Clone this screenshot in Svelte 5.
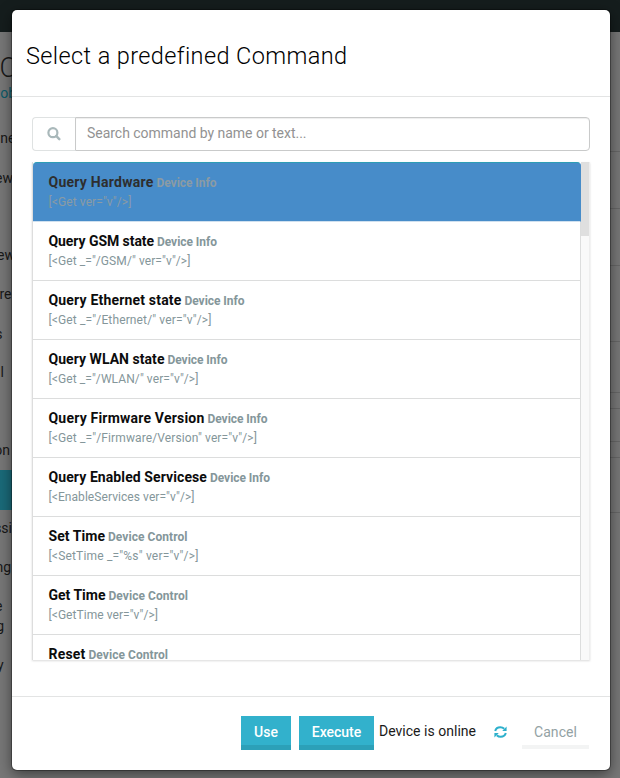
<script>
  const commands = [
    { name: 'Query Hardware', nw: 105, tag: 'Device Info', tw: 60, code: '[<Get ver="v"/>]', cw: 83 },
    { name: 'Query GSM state', nw: 105.5, tag: 'Device Info', tw: 60, code: '[<Get _="/GSM/" ver="v"/>]', cw: 142 },
    { name: 'Query Ethernet state', nw: 133, tag: 'Device Info', tw: 60, code: '[<Get _="/Ethernet/" ver="v"/>]', cw: 163 },
    { name: 'Query WLAN state', nw: 116, tag: 'Device Info', tw: 60, code: '[<Get _="/WLAN/" ver="v"/>]', cw: 150 },
    { name: 'Query Firmware Version', nw: 156, tag: 'Device Info', tw: 60, code: '[<Get _="/Firmware/Version" ver="v"/>]', cw: 208.5 },
    { name: 'Query Enabled Servicese', nw: 158.5, tag: 'Device Info', tw: 60, code: '[<EnableServices ver="v"/>]', cw: 146 },
    { name: 'Set Time', nw: 56.5, tag: 'Device Control', tw: 79.5, code: '[<SetTime _="%s" ver="v"/>]', cw: 150 },
    { name: 'Get Time', nw: 57, tag: 'Device Control', tw: 79.5, code: '[<GetTime ver="v"/>]', cw: 109.5 },
    { name: 'Reset', nw: 37, tag: 'Device Control', tw: 79.5, code: '[<Reset ver="v"/>]', cw: 95 }
  ];
  const navTexts = [
    { t: 'IC', y: 53, r: 17, s: 27, k: 'big' },
    { t: 'ob', y: 83, r: 16, s: 14, k: 'link' },
    { t: 'ne', y: 128, r: 15.5, s: 14 },
    { t: 'ew', y: 168, r: 13, s: 14 },
    { t: 'ew', y: 245, r: 15, s: 14 },
    { t: 're', y: 284, r: 11.5, s: 14 },
    { t: 's', y: 324, r: 2.5, s: 14 },
    { t: 'l', y: 362, r: 4, s: 14 },
    { t: 'on', y: 440, r: 10, s: 14 },
    { t: 'ssi', y: 518, r: 12, s: 14 },
    { t: 'ng', y: 557, r: 11, s: 14 },
    { t: 'e', y: 596, r: 2.5, s: 14 },
    { t: 'g', y: 616, r: 4, s: 14 },
    { t: 'y', y: 655, r: 3.5, s: 14 }
  ];
  const rules = [151, 208, 265, 341, 392, 408, 441, 457, 512];

  // Spreads the letters of a label evenly over the given width.
  function fit(node, width) {
    node.style.letterSpacing = '0px';
    const natural = node.getBoundingClientRect().width;
    node.style.letterSpacing = (width - natural) / node.textContent.length + 'px';
  }
</script>

<div class="page">
  <div class="topbar"></div>
  {#each navTexts as n}
    <span class="nav {n.k ?? ''}" style="top:{n.y}px;right:{620 - n.r}px;font-size:{n.s}px">{n.t}</span>
  {/each}
  <div class="active"></div>
  {#each rules as y}
    <i class="rule" style="top:{y}px"></i>
  {/each}

  <section class="modal">
    <header><h1><span use:fit={321}>Select a predefined Command</span></h1></header>
    <div class="body">
      <div class="search">
        <div class="addon">
          <svg width="14" height="14" viewBox="0 0 14 14" fill="none" stroke="#a9b8ba" stroke-linecap="round">
            <circle cx="5.9" cy="5.7" r="4.5" stroke-width="2.2" />
            <path d="M9.4 9.2 12.3 12.1" stroke-width="2.5" />
          </svg>
        </div>
        <div class="input"><span use:fit={219.5}>Search command by name or text...</span></div>
      </div>
      <div class="list">
        <div class="items">
          {#each commands as c, i}
            <div class="item" class:selected={i === 0}>
              <div class="title"><b use:fit={c.nw}>{c.name}</b><em use:fit={c.tw}>{c.tag}</em></div>
              <div class="code"><span use:fit={c.cw}>{c.code}</span></div>
            </div>
          {/each}
        </div>
        <div class="track"><div class="thumb"></div></div>
      </div>
    </div>
    <footer>
      <button class="primary use"><span use:fit={24}>Use</span></button>
      <button class="primary exec"><span use:fit={49.5}>Execute</span></button>
      <div class="status"><span use:fit={97}>Device is online</span></div>
      <svg class="refresh" width="13" height="12" viewBox="0 0 13 12">
        <path d="M1.2 4.9C1.8 2.6 3.9 1.2 6.3 1.2c1.5 0 2.9.6 3.9 1.6M11.8 7.1c-.6 2.3-2.7 3.7-5.1 3.7-1.5 0-2.9-.6-3.9-1.6" fill="none" stroke="#2db0cc" stroke-width="2" />
        <path d="M12.6.6v4.3H8.2zM.4 11.4V7.1h4.4z" fill="#2db0cc" />
      </svg>
      <button class="cancel"><span use:fit={43}>Cancel</span></button>
    </footer>
  </section>
</div>

<style>
  .page { position: relative; width: 620px; height: 778px; overflow: hidden; background: #777; font-family: Roboto, "Liberation Sans", sans-serif; box-sizing: border-box; padding: 10px 10px 8px 12px; }
  .page * { box-sizing: border-box; }
  .topbar { position: absolute; inset: 0 0 auto 0; height: 32px; background: #151d1d; }
  .nav { position: absolute; line-height: 20px; color: #181818; white-space: nowrap; }
  .nav.big { line-height: 30px; font-weight: 300; }
  .nav.link { color: #0b5a69; }
  .active { position: absolute; left: 0; top: 470px; width: 12px; height: 40px; background: #1a6a79; }
  .rule { position: absolute; right: 0; width: 10px; height: 1px; background: #666; }
  .modal { position: relative; width: 598px; height: 760px; background: #fff; border-radius: 5px; display: flex; flex-direction: column; box-shadow: 0 0 0 1px rgba(0,0,0,.3), 0 4px 14px rgba(0,0,0,.5); }
  header { height: 87px; border-bottom: 1px solid #e3e4e4; padding: 30px 0 0 14px; }
  h1 { margin: 0; font-size: 23.5px; line-height: 32px; font-weight: 300; color: #000; white-space: nowrap; }
  .body { height: 599px; padding: 20px 20px 0; }
  .search { display: flex; height: 34px; }
  .addon { width: 43px; border: 1px solid #dfe2e2; border-right: 0; border-radius: 4px 0 0 4px; display: flex; align-items: center; justify-content: center; padding-right: 1px; }
  .input { flex: 1; border: 1px solid #c9caca; border-radius: 0 4px 4px 0; padding-left: 11px; line-height: 31px; font-size: 14px; color: #929292; box-shadow: inset 0 1px 1px rgba(0,0,0,.07); white-space: nowrap; }
  .list { margin-top: 11px; height: 498px; display: flex; overflow: hidden; box-shadow: 0 1px 2px rgba(0,0,0,.15); }
  .items { flex: 1; border-left: 1px solid #ddd; }
  .item { height: 59px; border-bottom: 1px solid #dcdddd; border-right: 1px solid #dcdddd; padding: 9px 0 0 15.5px; white-space: nowrap; }
  .item.selected { height: 60px; background: #478cc9; border-color: #478cc9; border-bottom-color: #cfe0ef; border-radius: 4px 4px 0 0; border-top: 1px solid #2d9db5; }
  .title { display: flex; gap: 3px; align-items: baseline; height: 21px; line-height: 20px; }
  b { font-size: 14px; font-weight: 700; color: #0c0c0c; }
  em { font-style: normal; font-size: 12px; font-weight: 700; color: #84969a; }
  .code { font-size: 12px; line-height: 18px; color: #84969a; }
  .selected b { color: #2e2e2e; }
  .selected em, .selected .code { color: #8b9ba4; }
  .track { width: 9px; background: #f9f9f9; border-right: 1px solid #eee; }
  .thumb { height: 74px; background: #dfdfdf; }
  footer { height: 74px; border-top: 1px solid #e3e4e4; padding: 19px 21px 0 229px; display: flex; }
  button { border: 0; padding: 0; font: 500 14px/32px Roboto, "Liberation Sans", sans-serif; height: 34px; display: flex; justify-content: center; white-space: nowrap; }
  .primary { background: #32b1cc; color: #fff; box-shadow: inset 0 -5px #2ca0b8; }
  .use { width: 50px; margin-right: 8px; }
  .exec { width: 75px; }
  .status { margin-left: 5px; width: 115px; font-size: 14px; line-height: 31px; color: #1a1a1a; white-space: nowrap; }
  .refresh { margin-top: 10px; flex: none; }
  .cancel { margin-left: auto; width: 67px; background: #fff; color: #93a2a4; height: 33px; font-weight: 400; box-shadow: inset 0 -4px #f3f4f4; }
</style>
